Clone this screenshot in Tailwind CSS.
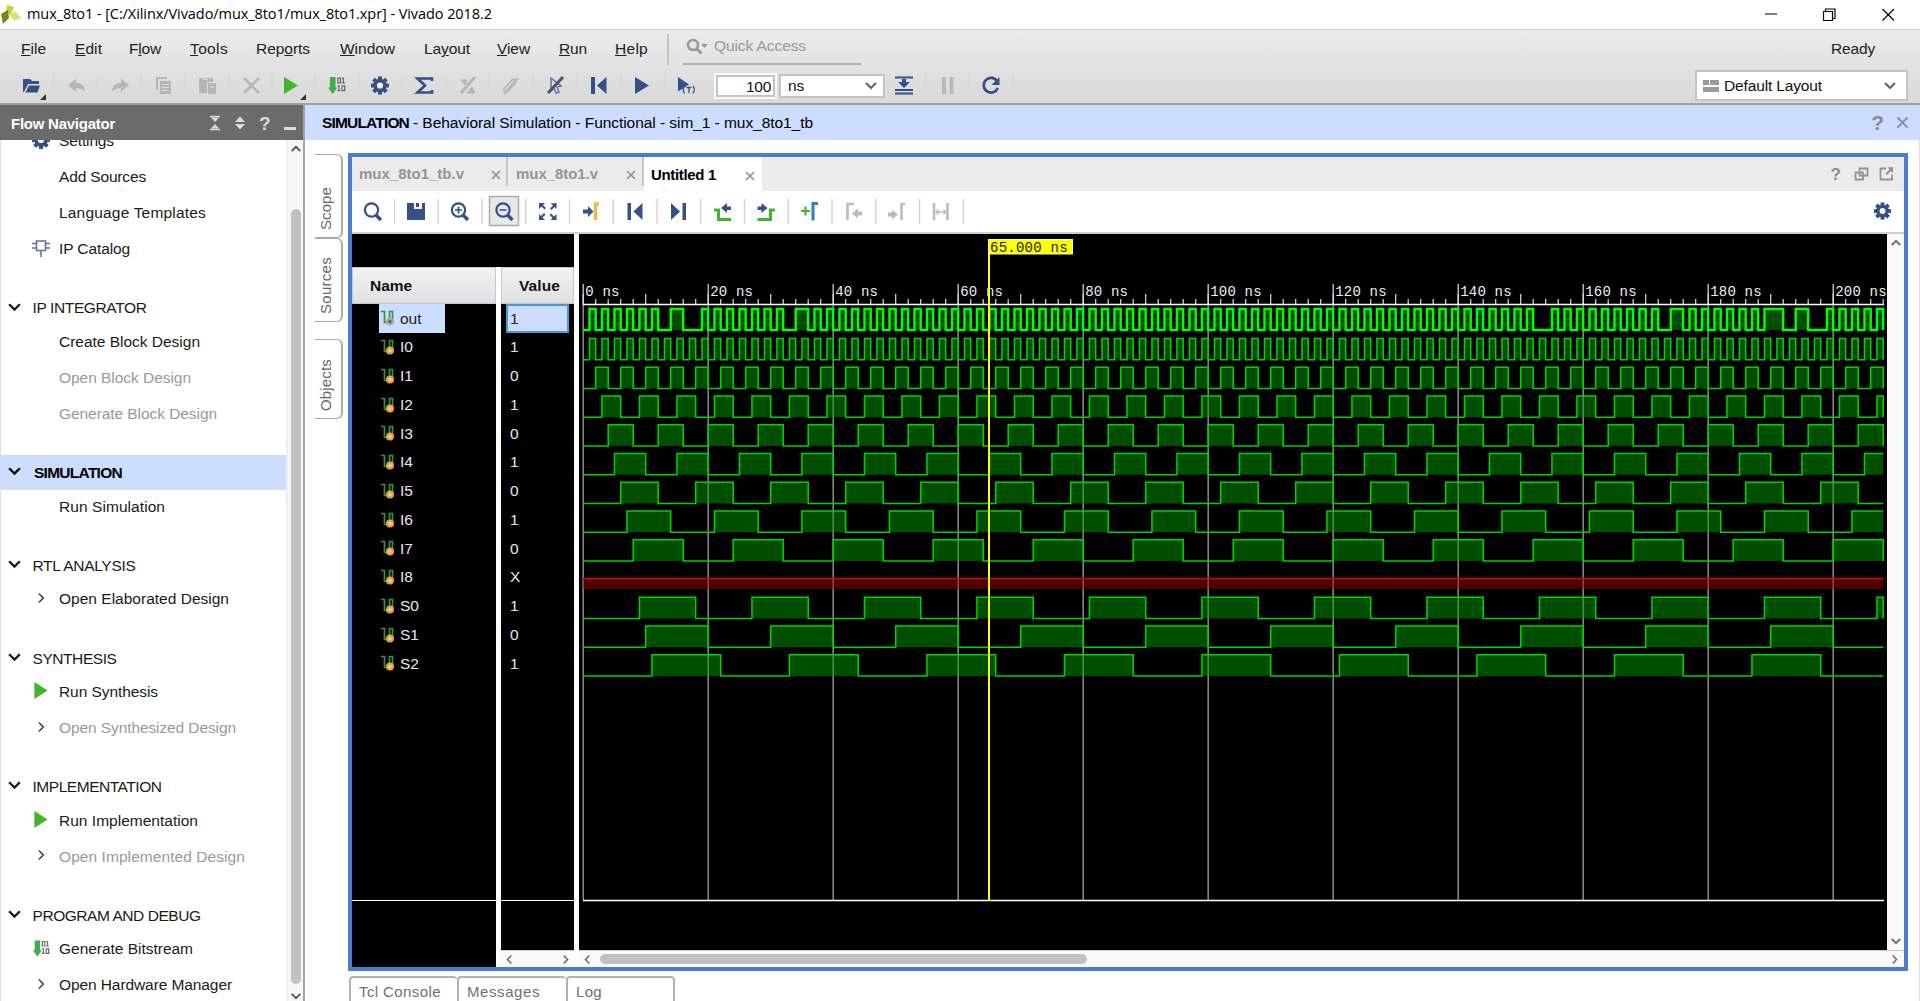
<!DOCTYPE html>
<html lang="en">
<head>
<meta charset="utf-8">
<title>mux_8to1 - Vivado 2018.2</title>
<script src="https://cdn.jsdelivr.net/npm/@tailwindcss/browser@4"></script>
</head>
<body class="w-[1920px] h-[1001px] overflow-hidden bg-white font-['Liberation_Sans',Arial,sans-serif] text-[15.5px] leading-none text-[#1a1a1a] whitespace-nowrap flex flex-col">

<!-- shared icon shapes -->
<svg class="hidden">
  <symbol id="gear" viewBox="-10 -10 20 20"><g fill="#335089"><rect x="-2" y="-9" width="4" height="18"/><rect x="-2" y="-9" width="4" height="18" transform="rotate(45)"/><rect x="-2" y="-9" width="4" height="18" transform="rotate(90)"/><rect x="-2" y="-9" width="4" height="18" transform="rotate(135)"/></g><circle r="4.9" fill="none" stroke="#335089" stroke-width="3.6"/><circle r="3.1" fill="#f4f4f4"/></symbol>
  <symbol id="bits" viewBox="0 0 20 20"><path d="M3 1h6v11h2l-5 7-5-7h2z" fill="#3fae49"/><g fill="none" stroke="#666" stroke-width="1.3"><path d="M11.5 2.2h2.8v5h-2.8zM16 2.2h1.3v5M15.8 7.2h3M11.3 10.5h1.3v5M11 15.500h3M15.800 10.500h2.8v5h-2.800z"/></g></symbol>
  <symbol id="down" viewBox="0 0 14 10"><path d="M2 2l5 5 5-5" fill="none" stroke="currentColor" stroke-width="2.2"/></symbol>
  <symbol id="right" viewBox="0 0 10 14"><path d="M2 2l5 5-5 5" fill="none" stroke="currentColor" stroke-width="1.8"/></symbol>
  <symbol id="play" viewBox="0 0 14 18"><path d="M0 0l14 9-14 9z" fill="currentColor"/></symbol>
  <symbol id="cross" viewBox="0 0 14 14"><path d="M1.500 1.500l11 11M12.500 1.500l-11 11" fill="none" stroke="currentColor" stroke-width="2.2"/></symbol>
</svg>

<header class="h-[29px] shrink-0 flex items-center pl-[1px] text-black">
  <svg class="w-5 h-[19px]" viewBox="0 0 20 19"><path d="M6 0l7 2-3 8-5-3z" fill="#c6d436"/><path d="M9 10l5-4 6 7-7 3z" fill="#dde36a"/><path d="M0 9l7-4 1 8-6 6z" fill="#7d8418"/></svg>
  <span class="ml-[6px] mb-px font-['Open_Sans',sans-serif] text-[14.500px]" data-w="465">mux_8to1 - [C:/Xilinx/Vivado/mux_8to1/mux_8to1.xpr] - Vivado 2018.2</span>
  <svg class="ml-auto mr-6 w-[132px] h-5" viewBox="0 0 132 20" fill="none" stroke="#000" stroke-width="1.2"><path d="M1 9h12M59.500 6.500h9v9h-9zM61.500 6v-2h9.500v9.500h-2.500M118.500 4l11.500 11.500M130 4l-11.500 11.500"/></svg>
</header>

<div class="h-[76px] shrink-0 border-t border-[#d2d2d2] border-b-2 border-b-[#a0a0a0] bg-linear-to-b from-[#ebebeb] to-[#d9d9d9] flex flex-col">
  <!-- menu bar -->
  <nav class="h-[38px] flex items-center pl-[21px] text-[#222]">
    <span class="w-[54px]"><span data-w="25"><u>F</u>ile</span></span>
    <span class="w-[54px]"><span data-w="27"><u>E</u>dit</span></span>
    <span class="w-[61px]"><span data-w="32">F<u>l</u>ow</span></span>
    <span class="w-[66px]"><span data-w="38"><u>T</u>ools</span></span>
    <span class="w-[84px]"><span data-w="54">Rep<u>o</u>rts</span></span>
    <span class="w-[84px]"><span data-w="55"><u>W</u>indow</span></span>
    <span class="w-[73px]"><span data-w="46">La<u>y</u>out</span></span>
    <span class="w-[62px]"><span data-w="33"><u>V</u>iew</span></span>
    <span class="w-[56px]"><span data-w="28"><u>R</u>un</span></span>
    <span class="w-[52px]"><span data-w="33"><u>H</u>elp</span></span>
    <i class="w-[2px] h-[31px] bg-[#c4c4c4]"></i>
    <div class="ml-[14px] -mt-px h-[32px] w-[178px] border-b-2 border-[#b2b2b2] flex items-center pl-[3px] pb-[3px] text-[#999]">
      <svg class="w-6 h-5" viewBox="0 0 24 20"><circle cx="7" cy="9" r="5" fill="none" stroke="#999" stroke-width="2.6"/><path d="M10.500 12.500l5 5" stroke="#999" stroke-width="3"/><path d="M15 8h7l-3.500 4z" fill="#999"/></svg>
      <span class="ml-1" data-w="92">Quick Access</span>
    </div>
    <span class="ml-auto mr-[45px] text-[#222]" data-w="44">Ready</span>
  </nav>
  <!-- main toolbar -->
  <div class="h-[35px] flex items-center">
    <svg class="w-[714px] h-[35px]" viewBox="0 68 714 35">
      <path d="M53.500 74v16M97.500 74v16M141 74v16M185 74v16M229 74v16M272 74v16M315 74v16M359 74v16M402 74v16M446 74v16M489 74v16M533 74v16M577 74v16M621 74v16M665 74v16" stroke="#d6d6d6"/>
      <path d="M23 79h7l2 2h7v3H28l-4 8h-1z" fill="#335089"/><path d="M29 85.500h11l-2.500 7H25.500z" fill="#335089"/>
      <path d="M46 94v6h-6zM306 94v6h-6z" fill="#333"/>
      <g fill="#b6b6b6"><path d="M68 85l8-6v4q9 0 9 9-3-4-9-4v4z"/><path d="M129 85l-8-6v4q-9 0-9 9 3-4 9-4v4z"/>
      <path d="M156 77h11v2h-9v11h-2z"/><path d="M160 81h11v13h-11zM199 78h14v4h-6v11h-8z"/><path d="M208 83h8v11h-8z"/></g>
      <path d="M162 84.500h7M162 87.500h7M162 90.500h7" stroke="#dedede"/><path d="M203 79.500h5M210 87h4" stroke="#dedede"/>
      <path d="M244 78l15 15M259 78l-15 15" stroke="#b6b6b6" stroke-width="2.600"/>
      <path d="M284 77l14 8.500-14 8.500z" fill="#42b52c"/>
      <use href="#bits" x="327" y="76" width="19" height="19"/>
      <use href="#gear" x="370" y="75.500" width="20" height="20"/>
      <path d="M432 81v-2.500H417.500l7.500 7-7.500 7H432V90" fill="none" stroke="#335089" stroke-width="2.700"/>
      <g stroke="#b6b6b6" fill="#b6b6b6"><path d="M475 77l-14 16" stroke-width="3"/><path d="M461 80h6l-2 5zM467 93h8l-3-6z"/><path d="M504 89l8-9q4-2 4 2l-8 9q-5 2-4-2M507 91l8-9" fill="none" stroke-width="1.700"/><path d="M518 78l-14 16" stroke-width="2"/></g>
      <path d="M551 78l10 8-4 1 2 5-3 1-2-5-3 3z" fill="#d6def0" stroke="#5a74aa" stroke-width="1.500"/><path d="M563 77l-15 16" stroke="#555" stroke-width="3"/>
      <path d="M591 77h4v17h-4zM606.500 77v17l-9.500-8.500z" fill="#335089"/>
      <path d="M635 77l14 8.500-14 8.500z" fill="#335089"/>
      <path d="M678 77l11 7.500-11 7z" fill="#335089"/><path d="M684.500 86q-2.500 3.500 0 7.500M693 86q2.500 3.500 0 7.500M686.500 87.500h5M689 87.500v5.500" stroke="#335089" stroke-width="1.300" fill="none"/>
    </svg>
    <div class="w-[63px] h-[26px] border-2 border-[#fafafa] bg-white"><div class="h-full border-2 border-[#c4c4c4] flex items-center justify-end pr-[2px] pt-[3px] text-[#111]"><span data-w="25">100</span></div></div>
    <div class="ml-[2px] w-[106px] h-6 border-2 border-[#c4c4c4] bg-white flex items-center pl-[7px] pr-[5px] text-[#111]"><span data-w="16">ns</span><svg class="ml-auto w-[14px] h-[10px] text-[#666]"><use href="#down"/></svg></div>
    <svg class="w-[140px] h-[35px]" viewBox="885 68 140 35">
      <path d="M925.500 74v16M969 74v16M1013 74v16" stroke="#d6d6d6"/>
      <path d="M895 77.500h18M895 90h18M895 93.500h18" stroke="#335089" stroke-width="1.800"/><path d="M902 79h4v3h4l-6 6-6-6h4z" fill="#335089"/>
      <path d="M942 77h4v17h-4zM949.500 77h4v17h-4z" fill="#b9b9b9"/>
      <path d="M997 81a7.300 7.300 0 1 0 .8 7" fill="none" stroke="#335089" stroke-width="2.700"/><path d="M999.500 77v8h-8z" fill="#335089"/>
    </svg>
    <div class="ml-auto mr-[12px] w-[213px] h-[31px] border-2 border-[#c4c4c4] bg-white flex items-center pl-[6px] pr-[9px] text-[#111]">
      <svg class="w-4 h-[14px]" viewBox="0 0 16 14" fill="#999"><path d="M0 1h6v5H0zM7 1h9v5H7zM0 8h16v5H0z"/></svg>
      <span class="ml-[5px]" data-w="98">Default Layout</span>
      <svg class="ml-auto w-[14px] h-[10px] text-[#666]"><use href="#down"/></svg>
    </div>
  </div>
</div>

<div class="flex-1 min-h-0 flex">
  <!-- flow navigator -->
  <aside class="w-[305px] shrink-0 border-r-2 border-[#a3a3a3] flex flex-col">
    <div class="h-[35px] shrink-0 bg-[#6b6b6b] flex items-center pl-[11px] text-white font-bold">
      <span class="mt-px text-[15px]" data-w="104">Flow Navigator</span>
      <svg class="ml-auto w-[94px] h-6" viewBox="209 111 94 24" fill="#dcdcdc"><path d="M210 116.500h10M210 129.500h10" stroke="#dcdcdc" stroke-width="1.600"/><path d="M211 117.500h8l-4 4.500zM211 128.500h8l-4-4.500zM235 122h10l-5-5.500zM235 124h10l-5 5.500z"/><text x="259" y="130" class="font-bold text-[19px]">?</text><path d="M284 127h12v3h-12z"/></svg>
    </div>
    <div class="flex-1 min-h-0 flex">
      <div id="nav" class="w-[286px] overflow-hidden border-l border-[#ddd]"></div>
      <div class="w-[17px] bg-[#f7f7f7] border-l-2 border-[#efefef] flex flex-col items-center text-[#555]">
        <svg class="mt-1 w-[12px] h-[9px] rotate-180 shrink-0"><use href="#down"/></svg>
        <i class="mt-[56px] w-[10px] h-[775px] shrink-0 rounded-full bg-[#c1c1c1]"></i>
        <svg class="mt-2 w-[12px] h-[9px] shrink-0"><use href="#down"/></svg>
      </div>
    </div>
  </aside>

  <main class="flex-1 min-w-0 flex flex-col border-r border-[#ddd]">
    <div class="h-[35px] shrink-0 bg-[#ccddff] flex items-center pl-[17px] pr-[10px] text-black">
      <b class="mt-px" data-w="87">SIMULATION</b><span class="mt-px ml-1" data-w="400">- Behavioral Simulation - Functional - sim_1 - mux_8to1_tb</span>
      <b class="ml-auto text-[21px] text-[#8c8c8c]">?</b>
      <svg class="ml-3 w-[13px] h-[13px] text-[#8c8c8c]"><use href="#cross"/></svg>
    </div>
    <div class="flex-1 min-h-0 flex">
      <!-- docked side tabs -->
      <div class="w-[43px] shrink-0 pt-[14px] pl-[10px] flex flex-col items-start text-[#666] text-[15px]">
        <div class="w-[28px] h-[84px] border-y-[1.500px] border-r-2 border-[#aaa] rounded-r-md flex justify-center items-end pb-[7px]"><span class="[writing-mode:vertical-rl] rotate-180 mr-[6px]" data-h="43">Scope</span></div>
        <div class="w-[28px] h-[84px] border-y-[1.500px] border-r-2 border-[#aaa] rounded-r-md flex justify-center items-end pb-[7px]"><span class="[writing-mode:vertical-rl] rotate-180 mr-[6px]" data-h="57">Sources</span></div>
        <div class="mt-[17px] w-[28px] h-[80px] border-y-[1.500px] border-r-2 border-[#aaa] rounded-r-md flex justify-center items-end pb-[7px]"><span class="[writing-mode:vertical-rl] rotate-180 mr-[6px]" data-h="52">Objects</span></div>
      </div>
      <div class="flex-1 min-w-0 pt-[13px]">
        <section class="w-[1560px] h-[818px] border-4 border-[#4a7dd0] flex flex-col">
          <!-- document tabs -->
          <div class="h-[34px] shrink-0 bg-[#ebebeb] flex font-bold text-[15px] text-[#949494]">
            <div class="w-[156px] h-[29px] border-r-2 border-[#c6c6c6] flex items-center pl-[7px] pt-[4px]"><span data-w="105">mux_8to1_tb.v</span><svg class="ml-auto mr-[5px] mt-[3px] w-[10px] h-[10px]"><use href="#cross"/></svg></div>
            <div class="w-[136px] h-[29px] border-r-2 border-[#c6c6c6] flex items-center pl-[8px] pt-[4px]"><span data-w="82">mux_8to1.v</span><svg class="ml-auto mr-[6px] mt-[3px] w-[10px] h-[10px]"><use href="#cross"/></svg></div>
            <div class="w-[118px] h-[34px] bg-white flex items-center pl-[7px] text-black"><span data-w="65">Untitled 1</span><svg class="ml-auto mr-[7px] mt-[3px] w-[10px] h-[10px] text-[#949494]"><use href="#cross"/></svg></div>
            <svg class="ml-auto w-[78px] h-[34px]" viewBox="1826 157 78 34"><text x="1830.500" y="180" fill="#8c8c8c" class="text-[17px] font-bold">?</text><path d="M1859.500 168.500h8v7h-8zM1855.500 172.500h7.500v7h-7.500zM1886 168.500h-5.500v11h11.500v-5" fill="none" stroke="#949494" stroke-width="1.800"/><path d="M1893 167v6l-2-2-4 4-1.500-1.500 4-4-2-2z" fill="#949494"/></svg>
          </div>
          <!-- waveform toolbar -->
          <svg class="w-[1552px] h-[43px] shrink-0 border-b-2 border-[#cfcfcf]" viewBox="352 191 1552 41">
            <g id="seps" stroke="#d6d6d6" stroke-width="1.500"></g>
            <rect x="489.500" y="196.500" width="29" height="29" fill="#e8e8e8" stroke="#adadad" stroke-width="1.500"/>
            <g fill="none" stroke="#335089" stroke-width="2.200"><circle cx="371.500" cy="210" r="6.600"/><circle cx="458.500" cy="210" r="6.600"/><circle cx="503" cy="210" r="6.600"/><path d="M376 215l5 5M463 215l5 5M507.500 215l5 5" stroke-width="3.400"/><path d="M455 210h7M458.500 206.500v7M499.500 210h7" stroke-width="1.700"/></g>
            <path d="M407 203h7v6h8v-6h3v17h-18zM416 203h3v4h-3z" fill="#335089"/>
            <g fill="#335089"><path d="M539 203h6l-2 2 3 3-1.500 1.500-3-3-2.500 2.500zM556.500 203v6l-2-2-3 3-1.500-1.500 3-3-2.500-2zM539 220v-6l2 2 3-3 1.500 1.500-3 3 2.500 2.500zM556.500 220h-6l2-2-3-3 1.500-1.500 3 3 2.500-2.500z"/>
            <path d="M583 209.500h5v-3.500l5.500 5.500-5.500 5.500v-3.500h-5zM627.500 203h3.500v17h-3.500zM642.500 203v17l-9-8.500zM671 203l9 8.500-9 8.500zM682.500 203h3.500v17h-3.500zM731 206.500h-4v-3.500l-6 5 6 5v-3h4zM757.500 206.500h4v-3.500l6 5-6 5v-3h-4z"/></g>
            <path d="M599 204h-3.500v16" fill="none" stroke="#e2c04b" stroke-width="3.600"/>
            <path d="M714 210h4.500v9.500h12.500M775 210h-4.500v9.500h-13" fill="none" stroke="#42b52c" stroke-width="3"/>
            <path d="M801 211h9M805.500 206.500v9" stroke="#42b52c" stroke-width="2.200"/><path d="M818 203.500h-5v17" fill="none" stroke="#2f80b8" stroke-width="3"/>
            <g fill="none" stroke="#bcbcbc" stroke-width="2.600"><path d="M854 204h-6.500v16M905 204h-3.500v16M934 203v17M947.500 203v17" /><path d="M936 212h10M938.500 209.500l-2.500 2.500 2.500 2.500M943.500 209.500l2.500 2.500-2.500 2.500" stroke-width="1.300"/></g>
            <path d="M862 211.500h-4v-3l-6 5 6 5v-3h4zM888 212.500h4v-3l6 5-6 5v-3h-4z" fill="#bcbcbc"/>
            <use href="#gear" x="1873" y="201.500" width="19" height="19"/>
          </svg>
          <div class="flex-1 min-h-0 flex bg-black">
            <!-- signal names and values -->
            <div class="w-[222px] shrink-0 flex flex-col">
              <div class="h-[33px] shrink-0"></div>
              <div class="flex-1 flex bg-white">
                <div class="w-[144px] bg-black flex flex-col">
                  <div class="h-[37px] shrink-0 bg-linear-to-b from-[#f2f2f2] to-[#e0e0e3] border border-[#c8c8c8] flex items-center pl-[17px] font-bold text-[#111]"><span data-w="42">Name</span></div>
                  <div id="names" class="h-[597px] border-b border-white text-[#e8e8e8]"></div>
                </div>
                <div class="ml-[5px] w-[73px] bg-black flex flex-col">
                  <div class="h-[37px] shrink-0 bg-linear-to-b from-[#f2f2f2] to-[#e0e0e3] border border-[#c8c8c8] flex items-center pl-[17px] font-bold text-[#111]"><span data-w="41">Value</span></div>
                  <div id="values" class="h-[597px] shrink-0 border-b border-white text-[#e8e8e8]"></div>
                  <div class="mt-auto h-[17px] bg-[#fafafa] border-t border-[#ccc] flex items-center justify-between px-[4px] text-[#666]"><svg class="w-2 h-[11px] rotate-180"><use href="#right"/></svg><svg class="w-2 h-[11px]"><use href="#right"/></svg></div>
                </div>
              </div>
            </div>
            <div class="w-[5px] bg-white"></div>
            <div class="flex-1 min-w-0 flex flex-col">
              <div class="h-[716px] flex">
                <svg id="wave" class="w-[1308px] h-[716px]" viewBox="579 234 1308 716"></svg>
                <div class="flex-1 bg-[#fafafa] flex flex-col items-center justify-between pt-1 pb-1 text-[#666]"><svg class="w-[12px] h-[9px] rotate-180"><use href="#down"/></svg><svg class="w-[12px] h-[9px]"><use href="#down"/></svg></div>
              </div>
              <div class="flex-1 bg-[#fafafa] border-t border-[#ccc] flex items-center pl-[4px] pr-[5px] text-[#666]"><svg class="w-2 h-[11px] rotate-180"><use href="#right"/></svg><i class="ml-[9px] w-[487px] h-[10px] rounded-full bg-[#c1c1c1]"></i><svg class="ml-auto w-2 h-[11px]"><use href="#right"/></svg></div>
            </div>
          </div>
        </section>
        <!-- console tabs -->
        <div class="mt-[5px] pl-px flex text-[#707070] text-[15px]">
          <div class="w-[108px] h-[30px] border-2 border-r-0 border-[#b2b2b2] rounded-t pl-2 pt-[6px]"><span data-w="82">Tcl Console</span></div>
          <div class="w-[109px] h-[30px] border-2 border-r-0 border-[#b2b2b2] rounded-t pl-2 pt-[6px]"><span data-w="73">Messages</span></div>
          <div class="w-[109px] h-[30px] border-2 border-[#b2b2b2] rounded-t pl-2 pt-[6px]"><span data-w="26">Log</span></div>
        </div>
      </div>
    </div>
  </main>
</div>

<script>
  // Flow navigator: [label, width, icon, disabled]
  const sections = [
    ['IP INTEGRATOR', 114, [['Create Block Design', 141], ['Open Block Design', 132, '', 1], ['Generate Block Design', 158, '', 1]]],
    ['SIMULATION', 88, [['Run Simulation', 106]]],
    ['RTL ANALYSIS', 103, [['Open Elaborated Design', 170, 'right']]],
    ['SYNTHESIS', 84, [['Run Synthesis', 99, 'play'], ['Open Synthesized Design', 177, 'right', 1]]],
    ['IMPLEMENTATION', 129, [['Run Implementation', 139, 'play'], ['Open Implemented Design', 186, 'right', 1]]],
    ['PROGRAM AND DEBUG', 168, [['Generate Bitstream', 134, 'bits'], ['Open Hardware Manager', 173, 'right']]]
  ];
  const icons = {
    right: '<svg class="w-[9px] h-[14px] text-[#444]"><use href="#right"/></svg>',
    play: '<svg class="w-[14px] h-[17px] text-[#42b52c]"><use href="#play"/></svg>',
    bits: '<svg class="w-[18px] h-[19px]"><use href="#bits"/></svg>',
    gear: '<svg class="w-[20px] h-[20px]"><use href="#gear"/></svg>',
    chip: '<svg class="w-[18px] h-[19px]" viewBox="0 0 18 19" fill="none" stroke="#5a74aa" stroke-width="1.600"><path d="M4.500 2h9v9.500h-9zM0 4.500h4.500M0 9h4.500M13.500 4.500H18M13.500 9H18M9 11.500V18"/></svg>'
  };
  const item = ([t, w, ic, off]) => `<div class="h-[36px] flex items-center ${off ? 'text-[#999]' : 'text-[#1a1a1a]'}"><span class="ml-[30px] w-[20px] mr-[8px] mb-[2px] flex justify-center">${icons[ic] || ''}</span><span data-w="${w}">${t}</span></div>`;
  document.getElementById('nav').innerHTML =
    '<div class="-mt-[17px]">' + [['Settings', 55, 'gear'], ['Add Sources', 87], ['Language Templates', 147], ['IP Catalog', 71, 'chip']].map(item).join('') + '</div>' +
    sections.map(([t, w, items]) => {
      const on = t === 'SIMULATION';
      return `<div class="mt-[23.700px] h-[35px] flex items-center ${on ? 'bg-[#ccddff] font-bold text-black' : ''}"><svg class="ml-[6px] mb-[2px] w-[15px] h-[11px] ${on ? 'mr-[12px]' : 'mr-[10.500px]'}"><use href="#down"/></svg><span data-w="${w}">${t}</span></div><div class="-mt-[2px]">${items.map(item).join('')}</div>`;
    }).join('');

  // Signals
  const signals = [['out', 1], ['I0', 1], ['I1', 0], ['I2', 1], ['I3', 0], ['I4', 1], ['I5', 0], ['I6', 1], ['I7', 0], ['I8', 'X'], ['S0', 1], ['S1', 0], ['S2', 1]];
  const probe = sel => `<svg class="w-[14px] h-[18px] mr-[5px]" viewBox="0 0 14 18"><path d="M0 2.500h3.500v11h3M8.500 13V2.500h3V13" fill="none" stroke="#2f9348" stroke-width="1.700"/><circle cx="9" cy="12.500" r="4" fill="${sel ? '#a9a9a9' : '#f0a040'}"/><circle cx="9" cy="12.500" r="1.500" fill="${sel ? '#555' : '#ffe2b0'}"/></svg>`;
  document.getElementById('names').innerHTML = signals.map(([n], i) => `<div class="h-[28.750px] ml-[27px] pl-[2px] flex items-center ${i ? '' : 'w-[66px] bg-[#ccddff] text-[#222]'}">${probe(!i)}<span>${n}</span></div>`).join('');
  document.getElementById('values').innerHTML = signals.map(([, v], i) => `<div class="h-[28.750px] flex items-center ${i ? 'ml-[9px]' : 'ml-[5px] w-[63px] pl-[2px] bg-[#ccddff] border-2 border-[#4a9bd4] text-[#222]'}">${v}</div>`).join('');

  // Waveforms
  const X = t => 583.2 + t * 6.25, END = 208;
  const pulse = (h) => { const r = []; for (let t = h; t < END; t += 2 * h) r.push([t, Math.min(t + h, END)]); return r; };
  const skip = [[12, 19], [32, 37], [152, 155], [172, 177], [188, 199]];
  const out = pulse(1).filter(([a]) => !skip.some(([s, e]) => a >= s && a < e))
    .concat([[14, 16], [34, 36], [174, 176], [189, 192], [194, 196]]).sort((a, b) => a[0] - b[0]);
  let g = '';
  for (let t = 0; t <= 200; t += 20) g += `<path d="M${X(t)} 304V900" stroke="#8c8c8c" stroke-width="1.500"/><path d="M${X(t)} 284V304" stroke="#d0d0d0" stroke-width="1.300"/><text x="${X(t) + 2}" y="296" fill="#eee" class="font-['Liberation_Mono',monospace] text-[14px]" letter-spacing=".2">${t} ns</text>`;
  for (let t = 0; t <= END; t += 2) g += `<path d="M${X(t)} ${t % 10 ? 299 : 294}V304.500" stroke="#ddd" stroke-width="1.200"/>`;
  g += `<path d="M583 304.500H1884M583 900.500H1884" stroke="#fff" stroke-width="1.300"/>`;
  const draw = (ps, top, h, color, sw) => {
    let d = `M${X(0)} ${top + h}`, f = '';
    ps.forEach(([a, b]) => {
      d += `H${X(a)}V${top}H${X(b)}` + (b < END || (b - a) % 2 === 0 || b - a === 1 ? `V${top + h}` : '');
      f += `<rect x="${X(a)}" y="${top}" width="${(b - a) * 6.25}" height="${h}" fill="#009b00" fill-opacity=".5"/>`;
    });
    if (!ps.length || ps[ps.length - 1][1] < END) d += `H${X(END)}`;
    g += f + `<path d="${d}" fill="none" stroke="${color}" stroke-width="${sw}"/>`;
  };
  draw(out, 309, 21, '#00ff00', 2.4);
  const halves = [1, 2, 3, 4, 5, 6, 7, 8, null, 9, 10, 11];
  halves.forEach((h, i) => {
    const top = 338.5 + i * 28.75;
    if (h) draw(pulse(h), top, 21.2, '#00d400', 1.5);
    else g += `<rect x="583" y="${top + 10}" width="1300" height="10.500" fill="#a00000" fill-opacity=".5"/><path d="M583 ${top + 10}H1883.500" stroke="#e00000" stroke-width="1.700"/>`;
  });
  g += `<path d="M989 240V900" stroke="#ffff00" stroke-width="2"/><rect x="988.500" y="239.500" width="84" height="14.500" fill="#ffff00" stroke="#f5f5c8"/><text x="990" y="252" fill="#222200" class="font-['Liberation_Mono',monospace] text-[14px]" letter-spacing=".25">65.000 ns</text>`;
  document.getElementById('wave').innerHTML = g;

  let s = '';
  for (let i = 0; i < 14; i++) s += `<path d="M${394.5 + i * 43.75} 199v25"/>`;
  document.getElementById('seps').innerHTML = s;

  const fit = () => document.querySelectorAll('[data-w],[data-h]').forEach(e => {
    e.style.letterSpacing = '0px';
    const w = e.dataset.w, r = e.getBoundingClientRect();
    e.style.letterSpacing = ((w ? w - r.width : e.dataset.h - r.height) / e.textContent.length).toFixed(3) + 'px';
  });
  window.addEventListener('load', () => { fit(); requestAnimationFrame(fit); setTimeout(fit, 50); });
</script>
</body>
</html>
